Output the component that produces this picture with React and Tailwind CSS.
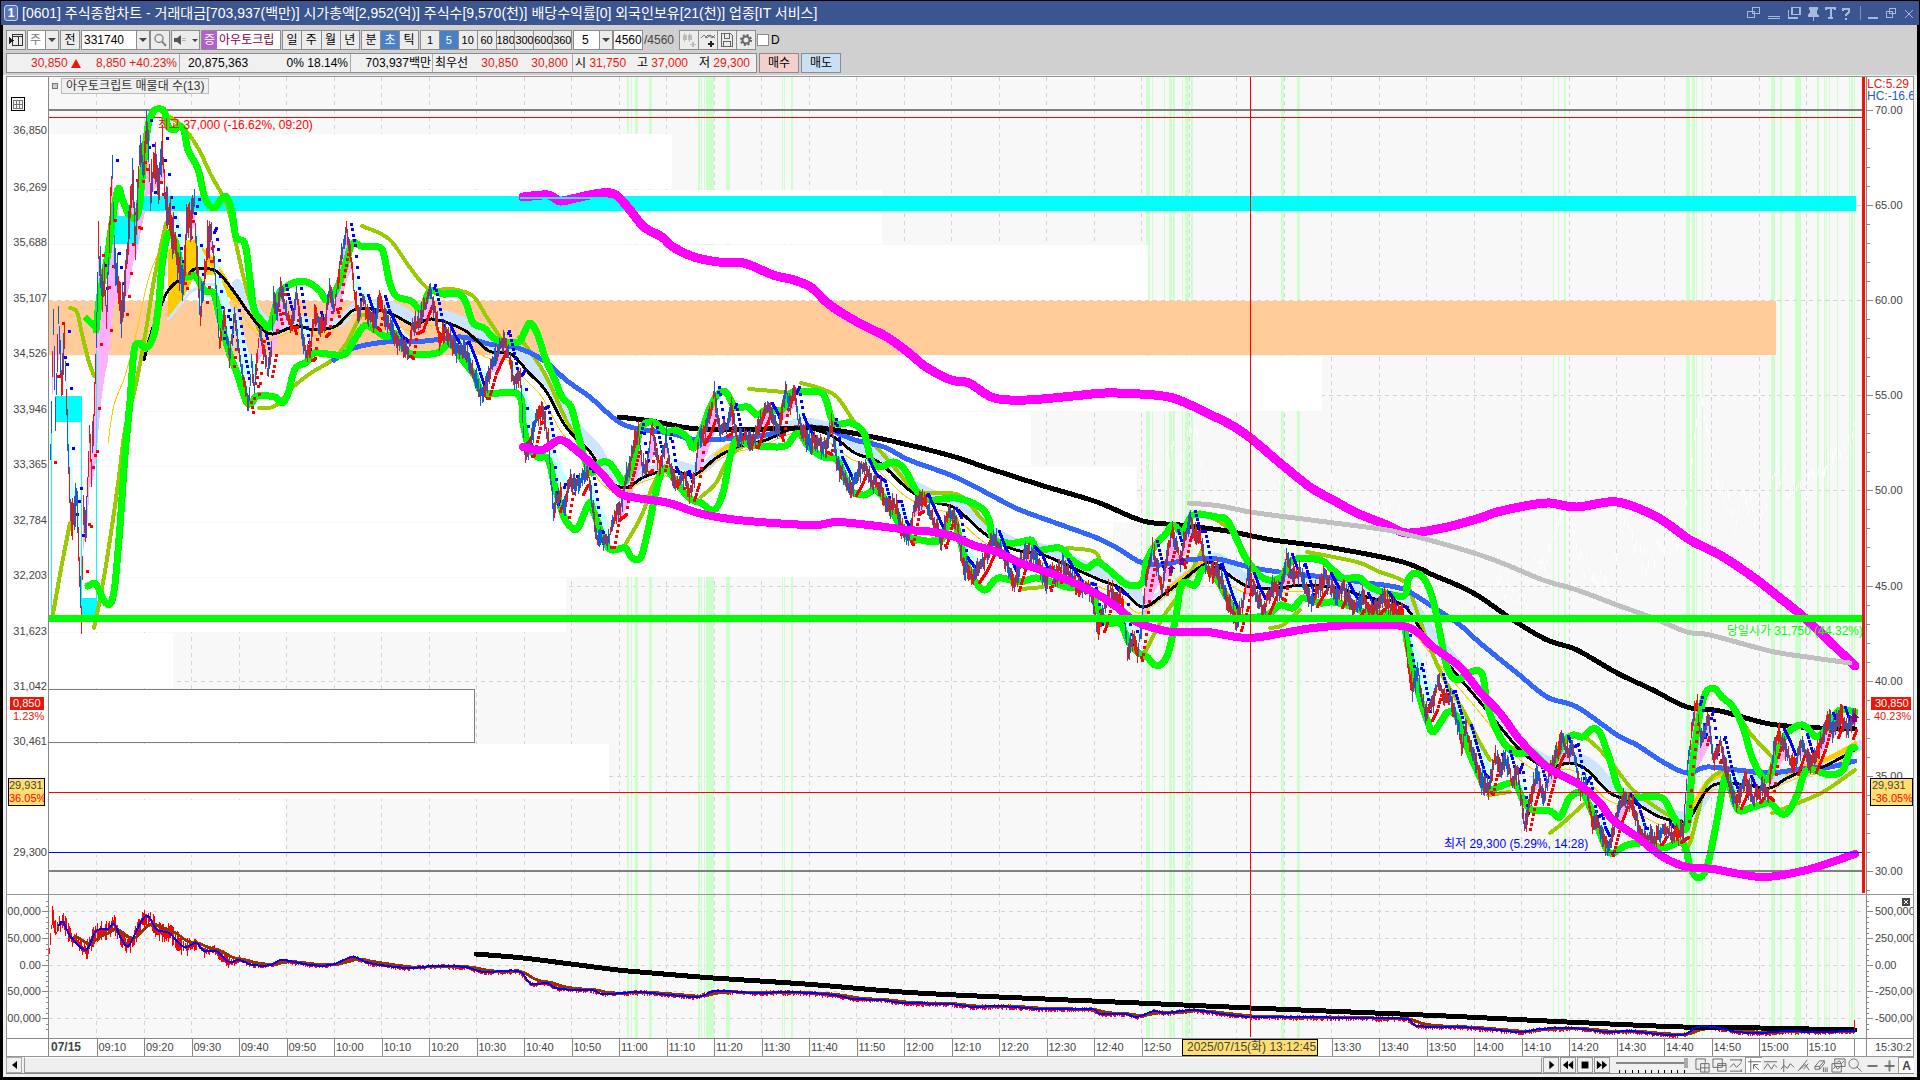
import React from 'react';
import clsx from 'clsx';

// drawing space of the plot column, both panes
const LEFT = 49;
const TOP = 77;
const WIDTH = 1817;
const HEIGHT = 961;
const STEP = 47.5;

const PRICE = '49,612 50,455 53,326 55,412 58,316 61,387 64,337 66,394 69,484 71,526 76,494 81,612 83,516 86,519 89,430 91,466 94,401 96,337 98,248 102,294 104,280 106,323 108,259 112,166 114,259 117,280 121,316 125,280 129,223 132,173 135,244 139,151 143,166 146,126 148,151 150,198 154,162 158,187 162,144 165,198 170,223 174,241 179,273 183,284 187,212 190,219 194,205 196,251 200,309 204,280 207,241 211,234 214,266 219,344 224,316 229,359 234,316 239,355 244,384 248,405 251,362 254,387 259,334 262,344 267,369 271,348 273,298 277,316 280,287 286,312 291,326 296,294 301,326 305,355 310,351 314,312 320,330 324,326 329,291 334,309 339,269 346,230 350,251 354,294 358,316 362,298 368,316 375,323 379,298 384,316 391,330 396,341 408,351 412,326 418,323 423,309 430,291 434,309 439,337 445,330 451,344 457,351 464,348 471,366 479,391 484,391 491,366 498,351 504,337 509,359 514,384 520,376 524,451 529,448 536,416 543,412 548,441 550,473 553,510 560,490 564,510 569,480 578,487 587,470 591,497 596,537 603,540 609,540 614,513 621,507 625,480 632,453 638,430 642,467 647,463 651,428 659,467 666,440 671,473 676,483 684,477 689,493 694,477 699,437 705,427 710,413 714,393 719,430 726,427 731,410 737,440 744,437 753,440 760,420 766,407 773,420 778,433 785,390 789,403 794,393 798,420 803,433 810,443 819,443 826,447 831,425 837,463 844,477 850,490 857,477 863,463 871,480 880,487 885,507 896,507 901,527 908,537 914,507 923,500 932,520 941,540 949,510 956,523 962,563 973,577 982,563 994,537 1000,553 1007,567 1014,583 1020,563 1027,550 1037,560 1046,583 1050,567 1055,577 1062,563 1070,577 1077,587 1090,590 1093,603 1097,630 1103,613 1108,590 1115,597 1122,600 1127,650 1132,637 1137,653 1141,627 1145,583 1152,547 1155,560 1162,587 1167,553 1172,532 1180,560 1185,533 1190,517 1195,537 1200,537 1207,573 1217,570 1227,600 1236,623 1243,600 1247,573 1253,590 1263,610 1272,587 1280,593 1286,557 1293,577 1300,570 1310,603 1317,590 1325,577 1337,600 1343,587 1355,610 1362,597 1370,613 1383,597 1392,610 1402,613 1407,660 1412,690 1417,670 1425,717 1432,703 1438,680 1443,700 1450,697 1457,723 1462,747 1465,727 1472,753 1480,780 1488,787 1495,753 1500,770 1505,757 1512,783 1517,770 1524,827 1530,797 1537,773 1543,797 1550,770 1556,753 1562,740 1568,753 1573,750 1580,790 1585,783 1592,823 1597,820 1600,833 1608,848 1615,820 1623,797 1633,810 1640,833 1647,837 1657,837 1663,827 1673,837 1683,830 1687,767 1693,717 1697,703 1700,743 1708,717 1713,760 1720,743 1727,777 1735,803 1745,780 1753,797 1762,787 1768,793 1773,750 1778,733 1785,747 1793,767 1802,740 1810,767 1820,743 1827,717 1833,730 1840,713 1847,733 1855,713';

const BAND_UPPER = [
  '87,319 94,326',
  '96,330 100,294 107,259 112,223 118,189 123,201 130,216 138,214 143,169 148,126 153,112 157,109 164,111 168,126 174,130 179,126 184,130 188,150 198,169 205,198 214,208 225,196 232,212 236,237 245,244 250,280 254,309 262,321 270,326 279,294 286,287 296,282 307,282 320,291 326,300 334,294 343,273 352,244 361,246 379,247 384,255 389,280 396,296 411,301 421,309 430,291 443,294 459,294 466,303 473,323 484,328 495,339 507,342 519,342 524,333 530,323 537,333 546,360 555,380 562,397 571,407 578,433 584,457 591,473 600,463 609,463 617,473 625,482 634,457 641,428 653,422 666,432 676,430 687,437 695,447 709,410 717,395 726,392 735,407 748,407 757,415 766,410 782,410 787,397 794,392 819,392 826,400 834,423 851,423 864,433 871,460 880,467 894,462 905,470 916,490 930,500 955,498 980,507 989,520 994,540 1015,543 1031,540 1038,550 1060,548 1072,560 1087,568 1098,562 1117,577 1128,585 1142,583 1147,560 1157,543 1165,535 1173,525 1183,532 1193,515 1217,517 1227,520 1237,540 1247,560 1263,578 1280,578 1293,560 1320,560 1333,570 1343,578 1360,578 1370,587 1393,595 1405,595 1408,580 1415,573 1425,580 1433,600 1440,633 1447,667 1457,680 1470,672 1482,674 1488,707 1500,737 1515,753 1533,753 1550,767 1563,743 1573,735 1583,737 1592,729 1600,733 1610,760 1618,787 1630,797 1660,797 1670,810 1680,827 1688,823 1693,760 1703,700 1713,688 1722,697 1733,707 1743,727 1753,760 1767,780 1777,753 1787,733 1803,725 1817,737 1830,723 1840,710 1855,712',
];

const BAND_LOWER = [
  '88,586 96,584 104,601 111,603 115,584 120,526 125,455 130,401 134,351 139,343 146,348 154,335 159,301 162,266 168,234 175,241 184,275 195,276 205,291 214,294 221,323 230,355 237,373 246,401 252,403 257,396 275,397 282,403 288,394 295,369 307,362 314,353 343,355 352,344 364,326 375,330 386,337 396,334 409,353 437,353 450,344 464,362 475,376 484,393 518,394 523,423 529,448 538,457 548,459 555,487 564,517 571,527 578,528 589,503 594,513 605,542 612,550 625,548 632,558 641,557 648,530 657,487 664,468 675,480 689,498 701,503 714,510 723,493 730,457 737,440 751,445 776,447 787,445 798,433 809,447 823,457 834,458 839,463 851,490 864,495 876,490 887,503 905,533 912,538 941,540 951,513 960,540 969,570 984,590 998,578 1020,582 1037,578 1067,587 1090,590 1097,607 1107,623 1120,623 1128,640 1137,652 1147,657 1155,665 1163,663 1170,647 1177,610 1182,583 1195,585 1202,570 1213,573 1230,603 1240,617 1267,615 1280,605 1293,608 1303,598 1320,603 1333,602 1353,607 1367,613 1400,617 1408,647 1417,687 1427,720 1433,732 1442,720 1448,712 1457,717 1467,747 1480,777 1488,790 1513,783 1523,800 1532,810 1550,811 1560,817 1570,797 1582,793 1590,807 1600,833 1610,853 1627,845 1647,843 1663,848 1683,843 1690,867 1698,878 1707,867 1717,820 1725,777 1730,787 1738,810 1753,807 1770,803 1780,813 1788,812 1798,793 1807,770 1830,775 1843,770 1850,750 1855,748',
];

const OLIVE = [
  '70,308 77,312 82,334 89,362 94,376',
  '53,614 61,569 70,523',
  '94,628 98,609 107,559 118,484 125,430 136,384 146,330 154,280 166,223',
  '168,116 182,126 198,148 211,175 227,205 236,244 246,287 259,330',
  '259,408 275,406 293,387 311,373 332,360 346,344 361,316 370,320',
  '362,226 389,239 411,269 429,289 452,289 473,296 486,316 500,337',
  '519,337 534,357 548,380 566,420 584,453',
  '626,543 641,517 651,490 659,473',
  '701,497 716,483 726,463 741,447 762,443',
  '749,389 784,392',
  '801,383 819,388 837,397 855,423 873,443 894,467 912,490',
  '914,542 941,538',
  '923,493 959,495 980,517 991,527',
  '1022,589 1043,587',
  '1067,548 1093,551 1100,560',
  '1142,657 1150,643 1163,617 1180,593 1197,560 1202,550',
  '1200,512 1220,522 1233,533',
  '1270,628 1283,625 1300,610',
  '1307,552 1357,562 1380,572 1405,582 1413,600 1427,640 1443,677 1463,710 1480,743 1490,760',
  '1488,795 1510,792',
  '1507,747 1533,750',
  '1550,833 1563,823 1585,803',
  '1583,735 1600,750 1617,770 1633,790 1660,810 1683,823',
  '1683,850 1690,843 1698,813 1707,783 1723,770',
  '1720,698 1733,707 1750,733 1772,757',
  '1772,813 1793,805 1823,792 1855,770',
];

const MAGENTA_UPPER = '523,197 548,195 560,201 576,198 601,193 616,195 630,210 644,227 662,237 673,247 694,257 719,262 744,263 773,275 794,280 812,288 830,305 859,323 887,337 909,353 926,367 951,380 969,383 994,398 1027,400 1073,396 1105,393 1140,394 1173,398 1207,413 1233,426 1253,440 1280,463 1310,487 1333,500 1357,513 1387,525 1407,533 1443,528 1480,518 1497,512 1530,505 1550,503 1577,507 1617,502 1657,517 1690,540 1720,555 1753,577 1780,598 1807,620 1855,666';
const MAGENTA_LOWER = '523,447 542,450 560,440 576,450 601,473 619,493 637,498 669,503 698,513 730,519 773,523 816,525 837,522 869,525 909,530 934,532 955,537 973,545 1000,553 1020,563 1050,573 1083,587 1110,602 1133,620 1150,627 1173,632 1207,632 1247,638 1283,633 1313,628 1353,625 1407,627 1433,647 1460,667 1480,692 1500,713 1520,740 1547,767 1580,785 1600,803 1613,820 1637,837 1663,857 1687,867 1713,869 1760,877 1793,873 1817,867 1855,854';
const MA_LONG = '619,417 651,421 698,429 766,429 816,428 841,431 873,437 909,445 955,457 987,468 1000,472 1047,487 1097,502 1143,521 1180,525 1227,531 1273,540 1333,548 1403,562 1433,575 1457,585 1480,597 1513,620 1547,640 1577,650 1617,673 1653,690 1687,707 1720,711 1770,724 1820,728 1855,729';
const MA_SHORT = '144,360 150,337 157,316 166,294 175,283 186,278 195,269 216,271 232,289 246,309 261,328 273,334 296,326 314,330 336,326 354,310 379,310 396,316 414,325 432,319 464,330 489,351 511,354 529,373 546,391 566,427 591,453 605,477 625,488 644,477 669,470 694,475 716,458 737,447 766,440 794,428 816,430 834,437 855,453 880,463 909,490 934,502 955,508 980,530 994,540 1016,550 1043,555 1073,568 1100,580 1120,588 1142,607 1163,595 1183,580 1200,567 1213,563 1233,578 1250,587 1277,588 1303,585 1337,588 1370,598 1403,605 1423,633 1447,663 1480,702 1497,723 1523,753 1547,767 1570,763 1587,770 1610,793 1633,802 1660,817 1683,822 1690,818 1707,790 1723,783 1747,785 1770,788 1787,778 1807,770 1823,767 1855,750';
const MA_BLUE = '334,360 354,348 386,342 425,341 461,337 489,344 518,348 546,362 566,380 591,398 616,420 634,428 669,433 698,440 737,438 766,435 794,428 823,428 855,440 884,447 909,460 955,477 1000,500 1020,510 1067,527 1097,538 1117,548 1140,562 1160,565 1187,560 1217,559 1253,568 1287,573 1333,578 1367,583 1403,589 1433,607 1460,625 1480,643 1517,673 1547,697 1577,707 1617,735 1637,745 1663,762 1687,773 1707,767 1737,770 1770,773 1807,768 1830,767 1855,761';
const MA_GRAY = '1189,503 1220,506 1250,512 1287,517 1350,525 1387,530 1413,536 1440,543 1480,555 1507,565 1543,580 1577,590 1617,605 1653,618 1687,632 1710,635 1770,651 1807,657 1850,663';
const YELLOW_LINE = '108,443 114,405 125,376 137,330 148,280 161,248 168,244 172,240';
const GHOSTS = [
  '1115,547 1117,533 1147,467 1152,447 1160,507 1167,460 1173,440 1178,470 1190,420 1200,450 1207,497 1217,493 1230,527 1247,497 1260,533 1270,500 1283,480 1293,477 1310,510 1320,486 1340,487 1353,513 1383,497 1400,513',
  '1400,527 1403,543 1417,600 1427,610 1437,577 1450,563 1460,620 1477,603 1497,577 1507,587 1525,607 1533,560 1543,560 1557,513 1570,515 1580,560 1593,573 1607,587 1623,520 1643,557 1667,543 1683,537 1687,477 1700,400 1713,460 1723,487 1734,520 1745,490 1753,510 1767,500 1773,460 1793,490 1810,480 1827,460 1845,450 1855,430',
];

const VOLUME = '49,948 52,915 56,932 59,925 63,922 71,937 86,950 96,931 108,929 114,924 122,940 129,945 141,922 148,916 157,930 169,933 184,947 196,943 204,951 216,951 229,962 239,960 253,965 271,965 282,960 310,965 331,965 353,957 369,963 408,968 433,966 465,967 484,972 518,971 531,984 547,983 559,989 592,990 602,994 624,993 640,992 696,997 715,991 756,993 790,992 834,995 853,999 882,1000 904,1003 950,1004 974,1007 999,1006 1042,1009 1091,1009 1100,1014 1125,1014 1137,1017 1154,1011 1166,1013 1193,1010 1222,1014 1251,1017 1285,1017 1367,1018 1407,1019 1417,1026 1460,1027 1487,1029 1520,1032 1540,1029 1573,1028 1607,1032 1630,1031 1657,1034 1683,1035 1697,1027 1713,1027 1737,1032 1760,1033 1787,1031 1813,1032 1855,1031';
const VOLUME_LONG = '476,954 523,958 571,964 618,970 640,972 713,978 805,984 902,992 999,997 1139,1003 1251,1008 1400,1014 1467,1017 1567,1022 1683,1027 1760,1028 1855,1030';

// [x, width] of the vertical signal stripes
const STRIPES = [
  [627, 2], [631, 1], [635, 3], [649, 3], [698, 2], [701, 1], [704, 1], [706, 8], [726, 4],
  [782, 1], [784, 1], [791, 2], [1146, 4], [1152, 1], [1164, 1], [1169, 3], [1173, 2], [1182, 1],
  [1185, 4], [1191, 2], [1281, 3], [1297, 3], [1553, 1], [1558, 1], [1564, 2], [1686, 4],
  [1692, 3], [1696, 1], [1702, 1], [1771, 4], [1780, 2], [1795, 6], [1817, 2], [1824, 1],
  [1826, 1], [1829, 1], [1837, 1], [1849, 1], [1851, 2], [1854, 1],
];

// [top, bottom, right edge] of the price-by-volume bars
const PROFILE = [
  [134, 189, 672], [190, 244, 882], [245, 301, 1148], [356, 411, 1322], [412, 466, 1031],
  [467, 522, 1137], [523, 577, 1113], [578, 632, 566], [633, 688, 173], [744, 799, 609], [800, 855, 286],
];

const LEFT_LABELS = [
  ['36,850', 130], ['36,269', 187], ['35,688', 242], ['35,107', 298], ['34,526', 353],
  ['33,946', 409], ['33,365', 464], ['32,784', 520], ['32,203', 575], ['31,623', 631],
  ['31,042', 686], ['30,461', 741], ['29,300', 852],
];
const RIGHT_LABELS = [
  ['70.00', 110], ['65.00', 205], ['60.00', 300], ['55.00', 395], ['50.00', 490],
  ['45.00', 586], ['40.00', 681], ['35.00', 776], ['30.00', 871],
];
const LOWER_LABELS = [
  ['00,000', '500,000', 911], ['50,000', '250,000', 938], ['0.00', '0.00', 965],
  ['50,000', '-250,000', 991], ['00,000', '-500,000', 1018],
];

const parse = (s) => s.split(' ').map((p) => p.split(',').map(Number));

function at(points, x) {
  if (x <= points[0][0]) return points[0][1];
  for (let i = 1; i < points.length; i++) {
    const [x1, y1] = points[i];
    const [x0, y0] = points[i - 1];
    if (x <= x1) return y0 + ((y1 - y0) * (x - x0)) / (x1 - x0);
  }
  return points[points.length - 1][1];
}

function random(seed) {
  let s = seed;
  return () => {
    s = (s * 16807) % 2147483647;
    return s / 2147483647;
  };
}

// Catmull-Rom through all points
function smooth(s) {
  const p = parse(s);
  let d = `M${p[0]}`;
  for (let i = 0; i < p.length - 1; i++) {
    const a = p[i - 1] || p[i];
    const b = p[i];
    const c = p[i + 1];
    const e = p[i + 2] || c;
    const c1 = [b[0] + (c[0] - a[0]) / 6, b[1] + (c[1] - a[1]) / 6];
    const c2 = [c[0] - (e[0] - b[0]) / 6, c[1] - (e[1] - b[1]) / 6];
    d += `C${c1[0].toFixed(1)} ${c1[1].toFixed(1)} ${c2[0].toFixed(1)} ${c2[1].toFixed(1)} ${c[0]} ${c[1]}`;
  }
  return d;
}

function buildPrice() {
  const pts = parse(PRICE);
  const rnd = random(71);
  const out = { up: '', down: '', high: '', low: '', pink: '', cyan: '' };
  let ema = 380;
  for (let x = LEFT + 1; x < 1856; x += 1) {
    const y = at(pts, x);
    ema += (y - ema) * (x < 90 ? 0.25 : 0.07);
    if (Math.abs(y - ema) > 5) {
      out[y < ema ? 'pink' : 'cyan'] += `M${x + 0.5} ${Math.round(y)}V${Math.round(ema)}`;
    }
    const wild = x < 210 ? 2 : 1;
    const len = (4 + rnd() * 7) * wild;
    const mid = Math.round(y + (rnd() - 0.5) * 8 * wild);
    const top = Math.round(mid - len);
    out[rnd() < 0.5 ? 'up' : 'down'] += `M${x + 0.5} ${top}V${Math.round(mid + len)}`;
    const slope = at(pts, x + 1) - at(pts, x - 7);
    const before = at(pts, x - 4);
    if (x % 2 === 0 || x > 210) {
      if (slope > 5) out.high += `M${x} ${Math.round(before - 6)}h3`;
      if (slope < -5) out.low += `M${x} ${Math.round(before + 7)}h3`;
    }
  }
  return out;
}

function buildVolume() {
  const pts = parse(VOLUME);
  const rnd = random(19);
  let bars = '';
  let slow = '';
  let ema = at(pts, 70);
  for (let x = LEFT; x < 1856; x += 1) {
    const y = at(pts, x);
    const size = x < 190 ? 10 : x < 240 ? 6 : 2.5;
    bars += `M${x + 0.5} ${Math.round(y - rnd() * size)}V${Math.round(y + 1 + rnd() * size)}`;
    if (x > 72) {
      ema += (y - ema) * 0.09;
      if (x % 3 === 0) slow += ` ${x},${ema.toFixed(1)}`;
    }
  }
  return { bars, slow: slow.trim() };
}

function buildGhost(line, seed) {
  const pts = parse(line);
  const rnd = random(seed);
  let d = '';
  for (let x = pts[0][0]; x < pts[pts.length - 1][0]; x += 2) {
    const y = Math.round(at(pts, x) + (rnd() - 0.5) * 24);
    d += `M${x + 0.5} ${y}v${3 + Math.round(rnd() * 6)}`;
  }
  return d;
}

const price = buildPrice();
const volume = buildVolume();
const ghosts = GHOSTS.map((g, i) => buildGhost(g, 5 + i));

const pctY = (y) => `${((y - TOP) / HEIGHT) * 100}%`;
const pctX = (x) => `${((x - LEFT) / WIDTH) * 100}%`;

function Line({ points, color, width }) {
  return <path d={smooth(points)} fill="none" stroke={color} strokeWidth={width} strokeLinejoin="round" strokeLinecap="round" />;
}

function Plot() {
  const right = LEFT + WIDTH;
  const columns = Array.from({ length: 38 }, (_, i) => LEFT + STEP * (i + 1));
  const rows = [...RIGHT_LABELS.map((r) => r[1]), ...LOWER_LABELS.map((r) => r[2])];
  return (
    <svg className="absolute inset-0 h-full w-full" viewBox={`${LEFT} ${TOP} ${WIDTH} ${HEIGHT}`} preserveAspectRatio="none" shapeRendering="crispEdges">
      <rect x={LEFT} y={TOP} width={WIDTH} height={HEIGHT} fill="#f8f8f8" />
      <g stroke="#d3d3d3" strokeDasharray="4 4">
        {columns.map((x) => <path key={x} d={`M${Math.floor(x) + 0.5} ${TOP}V${TOP + HEIGHT}`} />)}
        {rows.map((y) => <path key={y} d={`M${LEFT} ${y + 0.5}H1862`} />)}
      </g>
      {STRIPES.map(([x, w]) => <rect key={x} x={x} y={TOP} width={w} height={HEIGHT} fill="#ccffcc" />)}
      {PROFILE.map(([y1, y2, x]) => <rect key={y1} x={LEFT} y={y1} width={x - LEFT} height={y2 - y1} fill="#fff" />)}
      <rect x={LEFT} y="301" width={1776 - LEFT} height="54" fill="#ffcc99" />
      <path d="M49 300.5H1862" stroke="#d3d3d3" strokeDasharray="4 4" />
      <path d="M49 689.5H474.5V742.5H49" fill="#fff" stroke="#808080" />
      {ghosts.map((d) => <path key={d.slice(0, 12)} d={d} stroke="#fff" />)}

      <path d={`M${LEFT} 110H1862M${LEFT} 871H1862`} stroke="#808080" strokeWidth="2" />
      <path d={`M${LEFT} 117.5H1862`} stroke="#ff0000" />

      <g transform="translate(5 -5)"><Line points={MA_SHORT.slice(MA_SHORT.indexOf('232,'))} color="#cce4ff" width="10" /></g>
      <path d="M168 250L179 240 195 240 211 255 225 275 246 309 225 295 214 275 195 275 185 295 168 318Z" fill="#ffcc00" />
      <path d="M168 320L190 292 205 284 216 285 230 308 246 320" fill="none" stroke="#cce4ff" strokeWidth="3" />
      <path d={price.cyan} stroke="#ccffff" />
      <path d={price.pink} stroke="#ffb0ff" />
      <rect x="143" y="196" width="1713" height="15" fill="#00ffff" />
      <rect x="143" y="211" width="1712" height="1" fill="#ccffcc" />
      <Line points={MAGENTA_UPPER} color="#ff00ff" width="9" />
      <rect x="520" y="197" width="86" height="2" fill="#00ffff" />
      <rect x="109" y="216" width="29" height="28" fill="#00ffff" />
      <rect x="55" y="396" width="26" height="26" fill="#00ffff" />
      <rect x="82" y="598" width="15" height="17" fill="#00ffff" />
      <path d="M81.5 396V615M96.5 350V600M51 430V615" stroke="#00ffff" />

      <Line points={YELLOW_LINE} color="#ffcc00" width="1" />
      <g transform="translate(-4 6)"><Line points={MA_SHORT.slice(MA_SHORT.indexOf('232,'))} color="#ffcc00" width="1" /></g>
      <Line points="1688,818 1707,783 1723,774" color="#ffcc00" width="5" />
      <Line points="1787,774 1810,765 1832,757 1855,744" color="#ffcc00" width="5" />
      <Line points="1170,588 1185,576 1203,562" color="#ffcc00" width="5" />
      <Line points="716,455 730,445 742,441" color="#ffcc00" width="4" />
      {OLIVE.map((p) => <Line key={p} points={p} color="#99cc00" width="4" />)}
      <Line points={MA_GRAY} color="#c0c0c0" width="5" />
      <Line points={MA_BLUE} color="#3366ff" width="5" />
      <Line points={MA_LONG} color="#000" width="5" />
      <Line points={MA_SHORT} color="#000" width="3" />
      {[...BAND_UPPER, ...BAND_LOWER].map((p) => <Line key={p.slice(0, 12)} points={p} color="#00ff00" width="7" />)}
      <path d={price.high} stroke="#0000ff" strokeWidth="3" />
      <path d={price.low} stroke="#ff0000" strokeWidth="3" />
      <path d={price.up} stroke="#e8180c" />
      <path d={price.down} stroke="#1c5cc8" />
      <Line points={MAGENTA_LOWER} color="#ff00ff" width="8" />
      <rect x={LEFT} y="615" width="1813" height="7" fill="#00ff00" />
      <path d="M1171 565l4 4h-2v4h-4v-4h-2zM1182 557l4 4h-2v4h-4v-4h-2zM1854 713l5 5h-2v4h-5v-4h-2z" fill="#800080" />

      <path d={volume.bars} stroke="#ff0000" />
      <Line points={volume.slow} color="#993300" width="3" />
      <Line points={VOLUME_LONG} color="#000" width="5" />
      <Line points={VOLUME.slice(VOLUME.indexOf('59,'))} color="#0000ff" width="2" />
      <path d="M1854.5 1020v10" stroke="#ff0000" />

      <path d={`M${LEFT} 852.5H1862`} stroke="#0000ff" />
      <path d={`M${LEFT} 792.5H1865M1250.5 ${TOP}V1037`} stroke="#ff0000" />
      <path d={`M${LEFT} 894.5H${right}`} stroke="#969696" />
      <rect x="1862" y={TOP} width="3" height="816" fill="#e8180c" />
    </svg>
  );
}

function LeftAxis() {
  return (
    <div className="relative overflow-hidden border-r border-[#888] bg-white text-[11px] leading-3 text-[#444]">
      <svg className="absolute left-1 top-5 h-3.5 w-3.5" viewBox="0 0 14 14" shapeRendering="crispEdges">
        <rect x="0.5" y="0.5" width="13" height="13" fill="#f4f4f4" stroke="#000" />
        <path d="M2 3.5h10M2 7.5h10M2 11.5h10M2.5 3v9M5.5 3v9M8.5 3v9M11.5 3v9" stroke="#777" fill="none" />
      </svg>
      {LEFT_LABELS.map(([t, y]) => (
        <span key={t} className="absolute right-px -translate-y-1/2" style={{ top: pctY(y) }}>{t}</span>
      ))}
      {LOWER_LABELS.map(([t, , y]) => (
        <span key={y} className="absolute right-[7px] -translate-y-1/2" style={{ top: pctY(y) }}>{t}</span>
      ))}
      <div className="absolute inset-x-0 h-px bg-[#969696]" style={{ top: pctY(894) }} />
      <svg className="absolute inset-y-0 right-0 h-full w-1.5" viewBox={`0 ${TOP} 6 ${HEIGHT}`} preserveAspectRatio="none" shapeRendering="crispEdges">
        {LOWER_LABELS.map(([, , y]) => <path key={y} d={`M0 ${y + 0.5}h6M4 ${y - 5}h2M4 ${y - 10}h2M4 ${y + 6}h2M4 ${y + 11}h2`} stroke="#888" />)}
      </svg>
      <div className="absolute left-[3px] right-1 flex flex-col" style={{ top: pctY(697) }}>
        <span className="h-[13px] bg-[#e8180c] pl-[3px] leading-[13px] text-white">0,850</span>
        <span className="pl-[3px] text-[#e8180c]">1.23%</span>
      </div>
      <div className="absolute left-px right-[3px] flex flex-col overflow-hidden whitespace-nowrap border border-black bg-[#ffdf70] text-[11px] leading-[13px]" style={{ top: pctY(778) }}>
        <span>29,931</span>
        <span className="text-[#ff0000]">36.05%</span>
      </div>
    </div>
  );
}

function RightAxis() {
  const ticks = RIGHT_LABELS.map(([, y]) => `M0 ${y + 0.5}h6` + [19, 38, 57, 76].map((d) => (y + d < 894 ? `M0 ${y + d + 0.5}h3` : '')).join('')).join('');
  return (
    <div className="relative overflow-hidden border-l border-[#888] bg-white text-[11px] leading-3 text-[#444]">
      <svg className="absolute inset-y-0 left-0 h-full w-1.5" viewBox={`0 ${TOP} 6 ${HEIGHT}`} preserveAspectRatio="none" shapeRendering="crispEdges">
        <path d={ticks} stroke="#888" />
        {LOWER_LABELS.map(([, , y]) => <path key={y} d={`M0 ${y + 0.5}h6M0 ${y - 5}h2M0 ${y - 10}h2M0 ${y + 6}h2M0 ${y + 11}h2`} stroke="#888" />)}
      </svg>
      <div className="absolute left-0 top-px flex flex-col whitespace-nowrap text-xs leading-3">
        <span className="text-[#e8180c]">LC:5.29</span>
        <span className="text-[#1c5cc8]">HC:-16.6</span>
      </div>
      {RIGHT_LABELS.map(([t, y]) => (
        <span key={t} className="absolute left-2 -translate-y-1/2" style={{ top: pctY(y) }}>{t}</span>
      ))}
      {LOWER_LABELS.map(([, t, y]) => (
        <span key={y} className="absolute left-2 -translate-y-1/2 whitespace-nowrap" style={{ top: pctY(y) }}>{t}</span>
      ))}
      <div className="absolute inset-x-0 h-px bg-[#969696]" style={{ top: pctY(894) }} />
      <button type="button" aria-label="닫기" className="absolute right-[3px] h-2 w-2 bg-[#444]" style={{ top: pctY(898) }}>
        <svg viewBox="0 0 8 8" className="h-2 w-2"><path d="M2 2l4 4M6 2L2 6" stroke="#fff" /></svg>
      </button>
      <div className="absolute left-1 right-0.5 flex flex-col" style={{ top: pctY(697) }}>
        <span className="h-[13px] overflow-hidden bg-[#e8180c] pl-1 leading-[13px] text-white">30,850</span>
        <span className="pl-[3px] text-[#e8180c]">40.23%</span>
      </div>
      <div className="absolute left-[3px] right-0 flex flex-col overflow-hidden whitespace-nowrap border border-black bg-[#ffdf70] pl-px text-[11px] leading-[13px]" style={{ top: pctY(778) }}>
        <span>29,931</span>
        <span className="text-[#ff0000]">-36.05%</span>
      </div>
    </div>
  );
}

function TimeAxis() {
  const times = Array.from({ length: 39 }, (_, i) => {
    const m = 540 + i * 10;
    return `${String(Math.floor(m / 60)).padStart(2, '0')}:${String(m % 60).padStart(2, '0')}`;
  });
  const hidden = ['13:00', '13:10', '13:20', '15:20'];
  return (
    <div className="relative flex overflow-hidden border-t border-[#888] bg-white text-[11px] leading-4 text-[#444]">
      {times.map((t, i) => (
        <span key={t} className={clsx('shrink-0 overflow-hidden border-l pl-px', i === 0 ? 'border-transparent text-xs leading-4 font-bold' : 'border-[#888]')} style={{ width: `${(STEP / WIDTH) * 100}%` }}>
          {i === 0 ? '07/15' : hidden.includes(t) ? '' : t}
        </span>
      ))}
      <span className="absolute inset-y-0 overflow-hidden whitespace-nowrap border border-black bg-[#ffdf70] px-1 text-xs leading-[15px]" style={{ left: pctX(1182), width: '7.5%' }}>
        2025/07/15(화) 13:12:45
      </span>
    </div>
  );
}

const cell = 'flex items-center justify-center overflow-hidden border border-[#8c8c8c] bg-[#ececec]';

function ButtonGroup({ items, active, className }) {
  return (
    <div className={clsx('flex h-5 border border-[#8c8c8c]', className)}>
      {items.map((t) => (
        <button key={t} type="button" className={clsx('flex-1 basis-0 overflow-hidden whitespace-nowrap border-l border-[#8c8c8c] first:border-l-0', t === active ? 'bg-[#4a80c4] text-white' : 'bg-[#ececec]')}>
          {t}
        </button>
      ))}
    </div>
  );
}

function Arrow() {
  return (
    <span className="pointer-events-none absolute inset-y-0 right-0 flex w-3.5 items-center justify-center border border-[#8c8c8c] bg-[#ececec]">
      <svg viewBox="0 0 8 4" className="h-1 w-2"><path d="M0 0h8L4 4z" fill="#444" /></svg>
    </span>
  );
}

function Toolbar() {
  return (
    <div className="flex h-5 items-center gap-px text-xs">
      <button type="button" aria-label="목록" className={clsx(cell, 'h-5 w-5')}>
        <svg viewBox="0 0 14 14" className="h-3.5 w-3.5" shapeRendering="crispEdges"><path d="M3.5 1.5h10v11h-10zM3 3.5h10M9.5 4v8" stroke="#333" fill="none" /><path d="M0 4v7l5-3.5z" fill="#222" /></svg>
      </button>
      <label className="relative">
        <select aria-label="구분" className="h-5 w-8 appearance-none border border-[#8c8c8c] bg-white pl-0.5 text-[#777]"><option>주</option></select>
        <Arrow />
      </label>
      <button type="button" className={clsx(cell, 'h-5 w-5')}>전</button>
      <label className="relative">
        <input aria-label="종목코드" defaultValue="331740" className="block h-5 w-[69px] border border-[#8c8c8c] bg-white pl-0.5" />
        <Arrow />
      </label>
      <button type="button" aria-label="검색" className={clsx(cell, '-ml-px h-5 w-5')}>
        <svg viewBox="0 0 14 14" className="h-3.5 w-3.5"><circle cx="6" cy="5.5" r="4" stroke="#888" strokeWidth="1.5" fill="none" /><path d="M9 8.500l4 4.500" stroke="#888" strokeWidth="2" /></svg>
      </button>
      <button type="button" aria-label="소리" className={clsx(cell, 'h-5 w-[29px] gap-1.5')}>
        <svg viewBox="0 0 12 10" className="h-2.5 w-3"><path d="M0 3h3l4-3v10L3 7H0z" fill="#555" /><path d="M9 3v4M11 3v4" stroke="#777" strokeDasharray="1 1" /></svg>
        <svg viewBox="0 0 8 4" className="h-[3px] w-1.5"><path d="M0 0h8L4 4z" fill="#444" /></svg>
      </button>
      <div className="flex h-5 w-20 items-center overflow-hidden whitespace-nowrap border border-[#8c8c8c] bg-white text-[#800040]">
        <span className="h-full shrink-0 bg-[#b060d0] px-0.5 leading-[18px] text-white">증</span>
        <span className="pl-0.5">아우토크립</span>
      </div>
      <ButtonGroup items={['일', '주', '월', '년']} className="w-[78px]" />
      <ButtonGroup items={['분', '초', '틱']} active="초" className="w-[58px]" />
      <ButtonGroup items={['1', '5', '10', '60', '180', '300', '600', '3600']} active="5" className="w-[152px] text-[11px]" />
      <label className="relative">
        <select aria-label="간격" className="h-5 w-10 appearance-none border border-[#8c8c8c] bg-white pl-2"><option>5</option></select>
        <Arrow />
      </label>
      <input aria-label="개수" defaultValue="4560" className="-ml-px h-5 w-[30px] border border-[#8c8c8c] bg-white pl-px" />
      <span className="w-[34px] text-[#444]">/4560</span>
      <div className="flex">
        <button type="button" aria-label="봉 추가" className={clsx(cell, 'h-5 w-5')}>
          <svg viewBox="0 0 16 16" className="h-4 w-4" shapeRendering="crispEdges"><path d="M2 3h4v5H2zM7 3h4v5H7zM3 1h1v9H3zM8 1h1v9H8zM11 10h2v5h-2zM9 12h6v1H9z" fill="#bbb" /></svg>
        </button>
        <button type="button" aria-label="지표 추가" className={clsx(cell, '-ml-px h-5 w-5')}>
          <svg viewBox="0 0 16 16" className="h-4 w-4"><path d="M1 6l3-3 3 3 3-3 5 3M5 6l3-3 4 3 3-3" stroke="#777" fill="none" /><path d="M11 9v6M8 12h6" stroke="#222" strokeWidth="2" /></svg>
        </button>
        <button type="button" aria-label="저장" className={clsx(cell, '-ml-px h-5 w-5')}>
          <svg viewBox="0 0 16 16" className="h-4 w-4" shapeRendering="crispEdges"><path d="M2.500 1.500h9l2 2v11h-11zM5.500 1.500v5h5v-5M4.500 14v-5h7v5" stroke="#666" fill="none" /></svg>
        </button>
        <button type="button" aria-label="설정" className={clsx(cell, '-ml-px h-5 w-5')}>
          <svg viewBox="0 0 16 16" className="h-4 w-4"><circle cx="8" cy="8" r="5" stroke="#666" strokeWidth="2" strokeDasharray="2 1.930" fill="none" /><circle cx="8" cy="8" r="3.500" stroke="#666" strokeWidth="2" fill="none" /></svg>
        </button>
      </div>
      <label className="flex items-center gap-0.5"><input type="checkbox" className="h-3 w-3 appearance-none border border-[#8c8c8c] bg-white" />D</label>
    </div>
  );
}

function Quote() {
  return (
    <div className="flex h-5 gap-0.5 text-xs leading-[18px]">
      <div className="flex w-[751px] whitespace-nowrap border border-[#8c8c8c] bg-[#f0f0f0] text-[#e8180c]">
        <div className="flex w-[173px] justify-between border-r border-[#aaa] pl-6 pr-0.5">
          <span className="flex items-center gap-[3px]">
            30,850
            <svg viewBox="0 0 10 9" className="h-[9px] w-2.5" fill="#e8180c"><path d="M5 0l5 9H0z" /></svg>
          </span>
          <span>8,850 +40.23%</span>
        </div>
        <div className="flex w-[171px] justify-between border-r border-[#aaa] pl-2 pr-0.5 text-black">
          <span>20,875,363</span><span>0% 18.14%</span>
        </div>
        <div className="w-[82px] border-r border-[#aaa] pr-px text-right text-black">703,937백만</div>
        <div className="flex w-[140px] justify-between border-r border-[#aaa] px-0.5 pr-1">
          <span className="text-black">최우선</span><span>30,850</span><span>30,800</span>
        </div>
        <div className="flex flex-1 justify-between pl-0.5 pr-1.5">
          <span><span className="text-black">시</span> 31,750</span>
          <span><span className="text-black">고</span> 37,000</span>
          <span><span className="text-black">저</span> 29,300</span>
        </div>
      </div>
      <button type="button" className="w-10 border border-[#8c8c8c] bg-[#f4d0cc]">매수</button>
      <button type="button" className="w-10 border border-[#8c8c8c] bg-[#c8dff4]">매도</button>
    </div>
  );
}

function TitleBar() {
  return (
    <div className="mx-px flex h-6 items-center bg-[#3a5590] pl-[3px] pr-1 text-sm text-white">
      <span className="mr-1 flex h-4 w-3.5 items-center justify-center rounded-[3px] border border-[#c8d4f0] bg-[#5a78b8] text-xs font-bold">1</span>
      <h1 className="whitespace-nowrap">[0601] 주식종합차트 - 거래대금[703,937(백만)] 시가총액[2,952(억)] 주식수[9,570(천)] 배당수익률[0] 외국인보유[21(천)] 업종[IT 서비스]</h1>
      <svg viewBox="0 0 168 18" className="ml-auto h-[18px] w-[168px]" fill="none" stroke="#a8b8dc" shapeRendering="crispEdges">
        <path d="M5.500 3.500h7v6h-7zM.5 7.500h7v6h-7z" strokeWidth="1.500" />
        <path d="M21 12.500h12M21 14.500h12" />
        <path d="M45 3.500h8v7h-8zM41.500 6v8h9" strokeWidth="1.500" />
        <path d="M62 3h8v2h-1v4l2 2v1H61v-1l2-2V5h-1zM66 12v5" fill="#a8b8dc" />
        <path d="M79 6V4h9v2M83.500 4v10M81 14h5" strokeWidth="2" />
        <path d="M96 6.500V4.500h6v4l-3 2v1.500M99 13.500v2" strokeWidth="2" />
        <path d="M113.500 2v14" stroke="#7f90bc" />
        <path d="M121 13.500h10" strokeWidth="2" />
        <path d="M142.500 4.500h6v5h-6zM139.500 7.500h6v6h-6z" />
        <path d="M158 6l8 8M166 6l-8 8" shapeRendering="auto" />
      </svg>
    </div>
  );
}

const tools = [
  ['추가', 'M1 1h10v4M1 1v11h4M6 6h9v9H6zM6 10.500h9M10.500 6v9'],
  ['복사', 'M1 1h10v9H1zM6 6h9v8H6zM6 8h9'],
  ['기간', 'M1 2h13M1 14h13M1 10l4-4 3 4 5-5M13 1v3M13 12v3'],
  ['기준', 'M1 4h14M4 1v14M7 7l6 6M7 7v5M7 7h5'],
  ['추세', 'M1 4h14M1 12l4-6 4 6 3-5 3 3'],
  ['수직', 'M4 1v14M1 12l3-4 4 3 3-5 4 4'],
  ['각도', 'M1 14L11 2M3 12l6-5 4 6M7 12l5-6'],
  ['지우기', 'M1 9l5-6h5l-5 6zM1 9v3h5V9M6 12l5-6V3M10 10v5M12 10v5M14 10v5'],
  ['화면', 'M4 1h11v8H4zM1 6h10v9H1zM2 12l3-3 2 3 3-3M6 5l3-2 2 3 3-3'],
  ['확대경', 'M6 1a5 5 0 1 0 .1 0M9.500 9.500l5 5'],
  ['축소', 'M3 8h10v1H3z'],
  ['확대', 'M3 8h10v1H3zM7.500 3h1v11h-1z'],
];

function BottomBar() {
  const play = [['재생', 'M5 2l6 5-6 5z'], ['뒤로', 'M7 2v10L1 7zM13 2v10L7 7z'], ['정지', 'M3 3h8v8H3z'], ['앞으로', 'M1 2l6 5-6 5zM7 2l6 5-6 5z']];
  return (
    <div className="flex h-[17px] items-stretch border-b border-[#888] bg-[#f0f0f0]">
      <button type="button" aria-label="이전" className="flex w-4 items-center justify-center border border-[#aaa]">
        <svg viewBox="0 0 5 8" className="h-2 w-[5px]"><path d="M5 0v8L0 4z" /></svg>
      </button>
      <div className="ml-0.5 flex-1 border border-t-white border-[#999] bg-[#efefef]" />
      {play.map(([t, d]) => (
        <button key={t} type="button" aria-label={t} className="ml-px flex w-4 items-center justify-center border border-[#999]">
          <svg viewBox="0 0 14 14" className="h-3 w-3"><path d={d} /></svg>
        </button>
      ))}
      <div className="relative ml-1.5 w-[72px]">
        <input type="range" aria-label="속도" defaultValue="100" className="absolute left-0 top-0.5 h-2 w-full appearance-none bg-transparent [&::-webkit-slider-runnable-track]:h-0.5 [&::-webkit-slider-runnable-track]:bg-[#888] [&::-webkit-slider-thumb]:-mt-1 [&::-webkit-slider-thumb]:h-2.5 [&::-webkit-slider-thumb]:w-1 [&::-webkit-slider-thumb]:appearance-none [&::-webkit-slider-thumb]:bg-[#aaa]" />
        <svg viewBox="0 0 72 3" className="absolute bottom-0 h-[3px] w-full" shapeRendering="crispEdges"><path d="M2.500 1.500H72" stroke="#000" strokeWidth="3" strokeDasharray="1 5.500" /></svg>
      </div>
      <div className="ml-1.5 flex">
        {tools.map(([t, d]) => (
          <button key={t} type="button" aria-label={t} className={clsx('flex w-[17px] items-center justify-center', t === '기준' && 'border-l border-t border-[#999] bg-white')}>
            <svg viewBox="0 0 16 16" className="h-[15px] w-[15px]" fill="none" stroke="#666"><path d={d} /></svg>
          </button>
        ))}
        <button type="button" className="w-4 border-l border-t border-[#999] bg-white text-xs font-bold leading-4 text-[#444]">A</button>
      </div>
    </div>
  );
}

export default function App() {
  return (
    <div className="flex min-h-screen w-full flex-col bg-black pt-px font-['Liberation_Sans','Noto_Sans_CJK_KR',sans-serif] text-black">
      <TitleBar />
      <div className="mx-[3px] mb-[3px] flex flex-1 flex-col bg-[#f0f0f0]">
        <div className="flex flex-col gap-[3px] bg-[#d0d0d0] pb-0.5 pl-[3px] pt-[5px]">
          <Toolbar />
          <Quote />
        </div>
        <div className="mx-[3px] mt-px grid flex-1 grid-cols-[42px_1fr_47px] grid-rows-[1fr_18px] border border-[#969696]">
          <LeftAxis />
          <div className="relative overflow-hidden text-xs leading-3">
            <Plot />
            <div className="absolute left-[3px] top-px flex items-center gap-[3px] text-[#333]">
              <span className="h-1.5 w-1.5 border border-[#777] bg-[#ccc]" />
              <span className="border border-[#bbb] bg-[#f0f0f0] px-1 leading-[14px]">아우토크립트 매물대 수(13)</span>
            </div>
            <span className="absolute -translate-y-1/2 whitespace-nowrap text-[#ff0000]" style={{ left: pctX(158), top: pctY(125) }}>최고 37,000 (-16.62%, 09:20)</span>
            <span className="absolute -translate-y-1/2 whitespace-nowrap text-[#0000ff]" style={{ left: pctX(1444), top: pctY(844) }}>최저 29,300 (5.29%, 14:28)</span>
            <span className="absolute right-[3px] -translate-y-1/2 whitespace-nowrap text-[#00ff00]" style={{ top: pctY(631) }}>당일시가 31,750 (44.32%)</span>
          </div>
          <RightAxis />
          <div className="border-r border-t border-[#888] bg-white" />
          <TimeAxis />
          <div className="overflow-hidden border-l border-t border-[#888] bg-white pl-2 text-[11px] leading-4 text-[#444]">15:30:2</div>
        </div>
        <div className="mx-[3px] mb-[3px]"><BottomBar /></div>
      </div>
    </div>
  );
}
